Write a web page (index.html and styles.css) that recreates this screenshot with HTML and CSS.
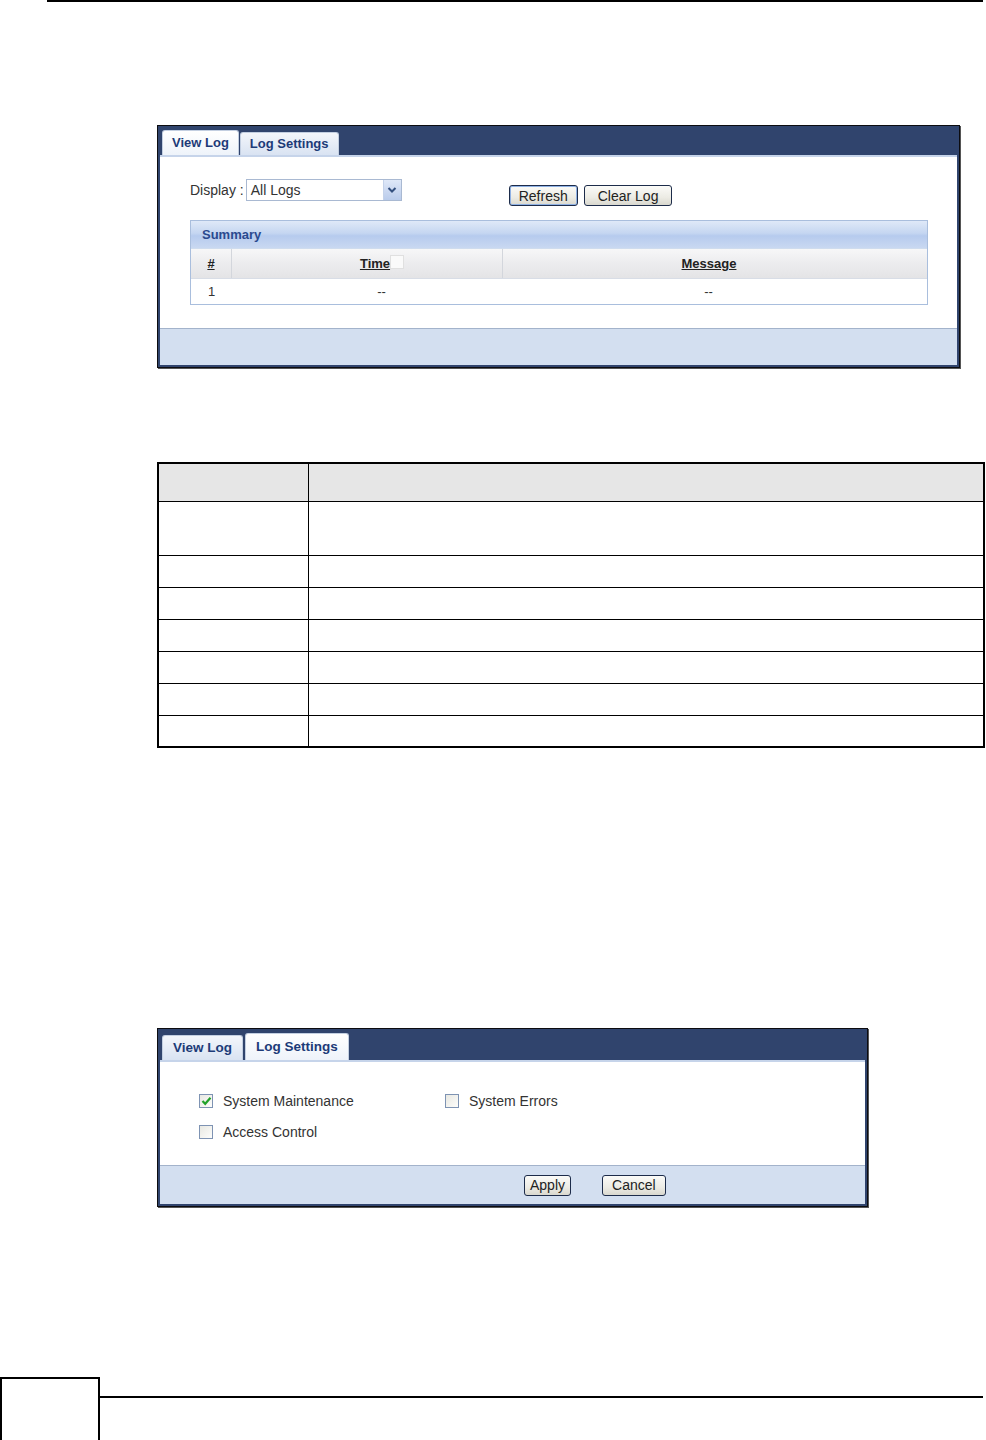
FILE: index.html
```html
<!DOCTYPE html>
<html lang="en">
<head>
    <meta charset="UTF-8">
    <meta name="viewport" content="width=device-width, initial-scale=1.0">
    <title>View Log</title>
    <link rel="stylesheet" href="styles.css">
</head>
<body>
    <div class="page">
        <div class="top-rule"></div>

        <!-- View Log screen -->
        <div class="panel panel-log">
            <div class="tabs">
                <div class="tab active">View Log</div>
                <div class="tab">Log Settings</div>
            </div>
            <div class="panel-body log-body">
                <div class="display-row">
                    <label class="field-label" for="display">Display :</label>
                    <div class="select" id="display">
                        <span>All Logs</span>
                        <span class="select-arrow">
                            <svg width="10" height="8" viewBox="0 0 10 8"><path d="M1.5 2 L5 5.5 L8.5 2" fill="none" stroke="#34507f" stroke-width="2"/></svg>
                        </span>
                    </div>
                    <div class="btn-group">
                        <button class="btn focused">Refresh</button>
                        <button class="btn clear">Clear Log</button>
                    </div>
                </div>

                <div class="summary">
                    <div class="summary-title">Summary</div>
                    <div class="summary-grid head">
                        <div class="cell"><u>#</u></div>
                        <div class="cell col-time"><u>Time</u><span class="sort-box"></span></div>
                        <div class="cell col-msg"><u>Message</u></div>
                    </div>
                    <div class="summary-grid row">
                        <div class="cell num">1</div>
                        <div class="cell col-time">--</div>
                        <div class="cell col-msg">--</div>
                    </div>
                </div>
            </div>
            <div class="panel-foot"></div>
        </div>

        <!-- field description table -->
        <table class="doc-table">
            <tr class="doc-head"><th></th><th></th></tr>
            <tr class="tall"><td></td><td></td></tr>
            <tr><td></td><td></td></tr>
            <tr><td></td><td></td></tr>
            <tr><td></td><td></td></tr>
            <tr><td></td><td></td></tr>
            <tr><td></td><td></td></tr>
            <tr><td></td><td></td></tr>
        </table>

        <!-- Log Settings screen -->
        <div class="panel panel-settings">
            <div class="tabs">
                <div class="tab">View Log</div>
                <div class="tab active">Log Settings</div>
            </div>
            <div class="panel-body settings-body">
                <div class="check-grid">
                    <label class="check"><span class="box checked"><svg width="11" height="10" viewBox="0 0 11 10"><path d="M1.5 5 L4.2 7.8 L9.5 1.8" fill="none" stroke="#22a22a" stroke-width="2.2"/></svg></span>System Maintenance</label>
                    <label class="check"><span class="box"></span>System Errors</label>
                    <label class="check"><span class="box"></span>Access Control</label>
                </div>
            </div>
            <div class="panel-foot settings-foot">
                <button class="btn apply">Apply</button>
                <button class="btn cancel">Cancel</button>
            </div>
        </div>

        <div class="page-foot">
            <div class="page-num"></div>
            <div class="foot-rule"></div>
        </div>
    </div>
</body>
</html>
```

FILE: styles.css
```css
:root {
    --navy: #30446d;
    --frame: #0c0c10;
    --tab-text: #1d3b78;
    --foot-bg: #d3dff0;
    --foot-line: #a3b3cb;
    --grid-line: #a9bedd;
    --ui-font: "Liberation Sans", Arial, sans-serif;
}
* {
    margin: 0;
    padding: 0;
    box-sizing: border-box;
}
body {
    font-family: var(--ui-font);
    background: #fff;
    color: #222;
}
.page {
    width: 986px;
    height: 1440px;
    overflow: hidden;
}
.top-rule {
    margin-left: 47px;
    width: 936px;
    border-top: 2px solid #000;
}

/* ---------- screenshot panels ---------- */
.panel {
    margin-left: 157px;
    border: 1px solid var(--frame);
    background: var(--navy);
    padding: 0 2px 2px 2px;
    box-shadow: 1px 1px 0 #555;
}
.panel-log {
    margin-top: 123px;
    width: 803px;
}
.panel-settings {
    margin-top: 280px;
    width: 711px;
}
.tabs {
    display: flex;
    align-items: flex-end;
    gap: 1px;
    height: 29px;
    padding-left: 2px;
}
.tab {
    height: 23px;
    padding: 0 9px;
    font-size: 13px;
    font-weight: bold;
    line-height: 22px;
    color: var(--tab-text);
    background: linear-gradient(#f3f6fb, #d9e3f2);
    border: 1px solid #c3cfe1;
    border-bottom: none;
    border-radius: 3px 3px 0 0;
}
.tab.active {
    height: 25px;
    line-height: 24px;
    background: linear-gradient(#ffffff, #eef3fa);
}
.panel-settings .tabs {
    height: 31px;
    gap: 2px;
}
.panel-settings .tab {
    height: 25px;
    padding: 0 10px;
    font-size: 13.5px;
    line-height: 24px;
}
.panel-settings .tab.active {
    height: 27px;
    line-height: 26px;
}
.panel-body {
    background: #fff;
    border-top: 2px solid #c6d4ea;
}
.panel-foot {
    height: 37px;
    background: var(--foot-bg);
    border-top: 1px solid var(--foot-line);
}

/* ---------- view log ---------- */
.log-body {
    padding: 22px 0 23px 30px;
}
.display-row {
    display: flex;
    align-items: flex-start;
    height: 28px;
    font-size: 14px;
}
.field-label {
    line-height: 22px;
    margin-right: 2px;
    color: #333;
}
.select {
    width: 156px;
    height: 22px;
    display: flex;
    align-items: center;
    justify-content: space-between;
    border: 1px solid #a9b9d2;
    padding-left: 4px;
    font-size: 14px;
    color: #333;
}
.select-arrow {
    width: 18px;
    height: 20px;
    display: flex;
    align-items: center;
    justify-content: center;
    background: linear-gradient(#dfe8f8, #b9cbeb);
    border-left: 1px solid #c4d2ea;
}
.btn-group {
    display: flex;
    gap: 6px;
    margin-left: 107px;
    margin-top: 6px;
}
.btn {
    height: 21px;
    padding: 0 9px;
    font-family: var(--ui-font);
    font-size: 14px;
    color: #222;
    background: linear-gradient(#fbfbf8, #ecebe4 60%, #d9d8cf);
    border: 1px solid #1d2c4a;
    border-radius: 3px;
}
.btn.focused {
    box-shadow: inset 0 0 0 1px #8fb1e4;
}
.btn.clear {
    padding: 0 13px;
}
.summary {
    margin-top: 13px;
    width: 738px;
    border: 1px solid var(--grid-line);
    font-size: 13px;
}
.summary-title {
    height: 28px;
    padding-left: 11px;
    line-height: 28px;
    font-weight: bold;
    color: #2a4a8f;
    background: linear-gradient(#dfe9f8, #c5d6f1 45%, #b6cbee 55%, #c9d8f1);
    border-bottom: 1px solid #cfdcee;
}
.summary-grid {
    display: grid;
    grid-template-columns: 40px 271px 1fr;
}
.summary-grid .cell {
    display: flex;
    align-items: center;
    justify-content: center;
}
.summary-grid .col-time {
    padding-left: 30px;
}
.summary-grid .col-msg {
    padding-right: 12px;
}
.summary-grid.head {
    height: 30px;
    background: linear-gradient(#f7f7f8, #ececee 50%, #e4e4e6);
    font-weight: bold;
    color: #222;
    border-bottom: 1px solid #d8dde6;
}
.summary-grid.head .cell + .cell {
    border-left: 1px solid #d3d6dc;
}
.sort-box {
    width: 14px;
    height: 14px;
    margin-top: -4px;
    border: 1px solid #e0e0e0;
    background: #fafafa;
}
.summary-grid.row {
    height: 25px;
    color: #333;
}
.summary-grid.row .num {
    justify-content: flex-start;
    padding-left: 17px;
}

/* ---------- description table ---------- */
.doc-table {
    margin-top: 94px;
    margin-left: 157px;
    width: 828px;
    border-collapse: collapse;
    border: 2px solid #000;
}
.doc-table td,
.doc-table th {
    border: 1px solid #000;
    border-width: 1.5px;
    height: 32px;
}
.doc-table td:first-child,
.doc-table th:first-child {
    width: 150px;
}
.doc-head th {
    height: 38px;
    background: #e6e6e6;
}
.doc-table tr.tall td {
    height: 54px;
}

/* ---------- log settings ---------- */
.settings-body {
    height: 105px;
    padding: 30px 0 0 39px;
}
.check-grid {
    display: grid;
    grid-template-columns: 246px auto;
    row-gap: 14px;
    font-size: 14px;
    color: #333;
}
.check {
    display: flex;
    align-items: center;
    gap: 10px;
    height: 17px;
}
.box {
    width: 14px;
    height: 14px;
    display: flex;
    align-items: center;
    justify-content: center;
    border: 1px solid #7e93b3;
    background: linear-gradient(135deg, #e8e8e2, #fdfdfb);
}
.settings-foot {
    height: 39px;
    display: flex;
    align-items: center;
    padding-left: 364px;
    gap: 31px;
}
.settings-foot .btn {
    padding: 0 5px;
}
.settings-foot .cancel {
    padding: 0 9px;
}

/* ---------- page footer ---------- */
.page-foot {
    margin-top: 170px;
    display: flex;
    align-items: flex-start;
}
.page-num {
    width: 100px;
    height: 66px;
    border: 2px solid #000;
}
.foot-rule {
    margin-top: 19px;
    width: 883px;
    border-top: 2px solid #000;
}
```
